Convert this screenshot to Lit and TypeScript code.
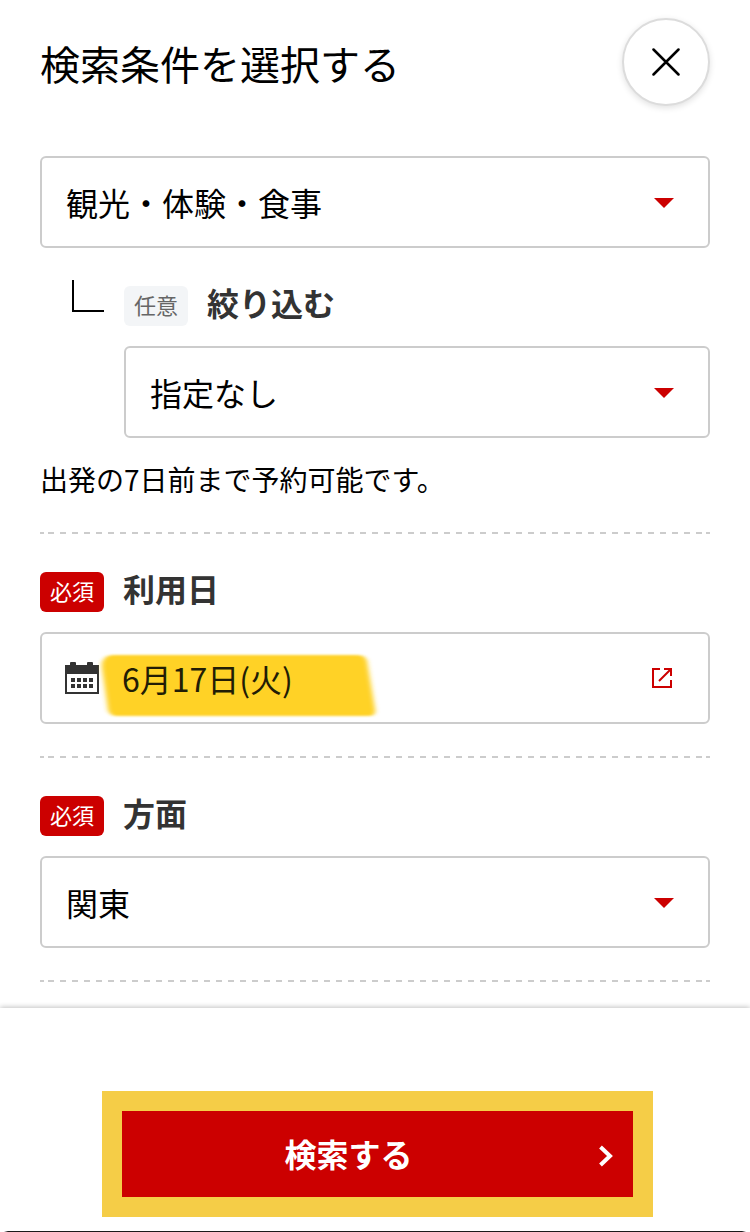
import { LitElement, html, css, svg } from "lit";
import { customElement, property } from "lit/decorators.js";

const caret = html`<svg class="caret" width="20" height="10" viewBox="0 0 20 10"><path d="M0 0H20L10 10Z" fill="#c00"/></svg>`;

@customElement("field-label")
class FieldLabel extends LitElement {
  static styles = css`
    :host { display: flex; align-items: center; height: 40px; gap: 19px; }
    .tag { box-sizing: border-box; width: 64px; height: 40px; border-radius: 6px; font-size: 22px; line-height: 36px; text-align: center; background: #f3f5f7; color: #666; }
    .required { background: #c00; color: #fff; }
    .name { height: 40px; font-size: 32px; font-weight: 700; line-height: 32px; color: #333; }
  `;
  @property() name = "";
  @property({ type: Boolean }) required = false;
  render() {
    return html`<span class="tag ${this.required ? "required" : ""}">${this.required ? "必須" : "任意"}</span><span class="name">${this.name}</span>`;
  }
}

@customElement("select-box")
class SelectBox extends LitElement {
  static styles = css`
    :host { display: flex; align-items: center; justify-content: space-between; box-sizing: border-box; height: 92px; border: 2px solid #ccc; border-radius: 6px; padding: 0 34px 0 24px; background: #fff; }
    .value { font-size: 32px; line-height: 48px; color: #000; }
    .caret { display: block; margin-top: 2px; }
  `;
  @property() value = "";
  render() {
    return html`<span class="value">${this.value}</span>${caret}`;
  }
}

@customElement("app-root")
class AppRoot extends LitElement {
  static styles = css`
    :host { display: flex; flex-direction: column; box-sizing: border-box; width: 750px; height: 1232px; overflow: hidden; background: #fff; color: #000; font-family: "Noto Sans CJK JP", sans-serif; }
    .body { flex: none; box-sizing: border-box; height: 1008px; padding: 18px 40px 0; overflow: hidden; }
    .head { display: flex; justify-content: space-between; height: 138px; }
    h1 { margin: 0; padding-top: 15px; font-size: 40px; line-height: 60px; font-weight: 400; }
    .close { box-sizing: border-box; width: 88px; height: 88px; border-radius: 50%; border: 2px solid #dcdcdc; background: #fff; padding: 0; display: grid; place-items: center; box-shadow: 0 2px 6px rgba(0,0,0,.12); }
    .close svg, .date svg, .submit svg { display: block; }
    .narrow { display: grid; grid-template-columns: 52px 1fr; padding: 32px 0 0 32px; }
    .branch { width: 30px; height: 30px; border: solid #000; border-width: 0 0 2px 2px; }
    .narrow-field { padding-top: 6px; }
    .narrow-field select-box, .group select-box { margin-top: 20px; }
    .note { margin: 0; padding-top: 20px; height: 74px; font-size: 28px; line-height: 42px; }
    .rule { height: 2px; background: linear-gradient(#ccc, #ccc) 0 0 / 4px 2px no-repeat, linear-gradient(#ccc, #ccc) 100% 0 / 4px 2px no-repeat, linear-gradient(90deg, #ccc 6px, transparent 6px) 8px 0 / 12px 2px repeat-x; }
    .group { padding: 38px 0 32px; }
    .date { box-sizing: border-box; display: flex; align-items: center; height: 92px; margin-top: 20px; border: 2px solid #ccc; border-radius: 6px; padding: 0 36px 0 23px; }
    .day { position: relative; flex: 1; margin-left: 23px; color: #221d05; font-size: 32px; line-height: 48px; }
    .day span { position: relative; }
    .marker { position: absolute; left: -24px; top: -4px; }
    .foot { flex: 1; box-sizing: border-box; padding: 83px 97px 0 102px; position: relative; background: linear-gradient(90deg, transparent 4px, #1b1b1b 8px calc(100% - 8px), transparent calc(100% - 4px)) 0 100% / 100% 1px no-repeat, #fff; box-shadow: 0 -1px 5px rgba(0,0,0,.24); }
    .submit { box-sizing: border-box; display: grid; grid-template-columns: 1fr auto; align-items: center; width: 551px; height: 126px; margin: 0; padding: 0 20px 0 0; border: 20px solid #f5cd47; background: #c00; color: #fff; font: 700 32px/48px "Noto Sans CJK JP", sans-serif; text-align: center; }
    .submit span { padding: 0 23px 2px 0; }
    .submit svg { margin-top: 4px; }
  `;

  render() {
    const dots = [6, 12, 18, 24].map(x => [16, 22].map(y => svg`<rect x=${x} y=${y} width="4" height="4" fill="#333"/>`));
    return html`
      <main class="body">
        <header class="head">
          <h1>検索条件を選択する</h1>
          <button class="close" aria-label="閉じる"><svg width="28" height="28" viewBox="0 0 28 28"><path d="M1.5 1.5L26.5 26.5M26.5 1.5L1.5 26.5" stroke="#000" stroke-width="2.5" stroke-linecap="round"/></svg></button>
        </header>
        <select-box value="観光・体験・食事"></select-box>
        <div class="narrow">
          <div class="branch"></div>
          <div class="narrow-field"><field-label name="絞り込む"></field-label><select-box value="指定なし"></select-box></div>
        </div>
        <p class="note">出発の7日前まで予約可能です。</p>
        <div class="rule"></div>
        <section class="group">
          <field-label name="利用日" required></field-label>
          <div class="date">
            <svg width="34" height="32" viewBox="0 0 34 32"><rect x="1" y="4" width="32" height="27" fill="#fff" stroke="#333" stroke-width="2"/><path d="M0 3H5V1Q5 0 6 0H10Q11 0 11 1V3H22V1Q22 0 23 0H27Q28 0 28 1V3H34V12H0Z" fill="#333"/>${dots}</svg>
            <div class="day">
              <svg class="marker" width="284" height="72" viewBox="0 0 284 72"><defs><filter id="soft" x="-5%" y="-10%" width="110%" height="120%"><feGaussianBlur stdDeviation="2.5 1"/></filter></defs><path d="M14 5H260Q267 5 269 11L277 59Q278 66 271 66H19Q12 66 10 60L4 18Q3 6 14 5Z" fill="#ffd226" filter="url(#soft)"/></svg>
              <span>6月17日(火)</span>
            </div>
            <svg width="20" height="20" viewBox="0 0 20 20"><path d="M8 1H1V19H19V12M12 1H19V8M19 1L7 13" fill="none" stroke="#c00" stroke-width="2"/></svg>
          </div>
        </section>
        <div class="rule"></div>
        <section class="group">
          <field-label name="方面" required></field-label>
          <select-box value="関東"></select-box>
        </section>
        <div class="rule"></div>
      </main>
      <footer class="foot">
        <button class="submit"><span>検索する</span><svg width="15" height="22" viewBox="0 0 15 22"><path d="M2.500 2L12 11L2.500 20" fill="none" stroke="#fff" stroke-width="4"/></svg></button>
      </footer>`;
  }
}
